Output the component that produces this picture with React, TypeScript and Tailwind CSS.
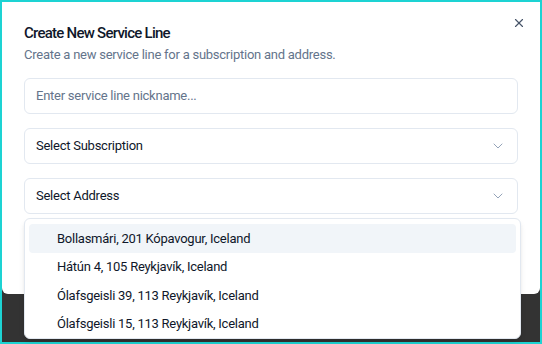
import { ChevronDown, X } from "lucide-react";

const addresses = [
  "Bollasmári, 201 Kópavogur, Iceland",
  "Hátún 4, 105 Reykjavík, Iceland",
  "Ólafsgeisli 39, 113 Reykjavík, Iceland",
  "Ólafsgeisli 15, 113 Reykjavík, Iceland",
];

const field =
  "relative flex h-[36px] w-full items-center rounded-md border border-[#e2e8f0] bg-white px-[11px] text-[13px] tracking-[-0.25px]";

const SelectField = ({ label }: { label: string }) => (
  <div className={`${field} justify-between text-[#0f172a]`}>
    <span>{label}</span>
    <ChevronDown className="h-4 w-4 text-[#94a3b8]" strokeWidth={1.5} />
  </div>
);

export default function App() {
  return (
    <div
      className="relative flex h-[344px] w-[542px] flex-col border-2 border-[#1dd3d3] bg-[#333333]"
      style={{ fontFamily: 'Roboto, "Noto Sans", sans-serif' }}
    >
      <div className="relative flex h-[292px] w-full flex-col rounded-b-md bg-white px-[22px] pt-[20px]">
        <button className="absolute right-[14px] top-[14px] text-[#475569]">
          <X className="h-[14px] w-[14px]" strokeWidth={2} />
        </button>
        <h2 className="text-[15px] font-medium leading-[23px] tracking-[-0.75px] text-[#0f172a]">
          Create New Service Line
        </h2>
        <p className="text-[13px] leading-[20px] tracking-[-0.25px] text-[#64748b]">
          Create a new service line for a subscription and address.
        </p>
        <div className="mt-[13px] flex flex-col gap-[14px]">
          <div className={`${field} text-[#64748b]`}>Enter service line nickname...</div>
          <SelectField label="Select Subscription" />
          <SelectField label="Select Address" />
        </div>
      </div>
      <div className="absolute left-[22px] top-[216px] w-[497px] rounded-md border border-[#e2e8f0] bg-white px-[4px] pt-[5px] shadow-md">
        {addresses.map((a, i) => (
          <div
            key={a}
            className={`flex h-[28.5px] items-center rounded-sm pl-[28px] text-[13px] tracking-[-0.25px] text-[#0f172a] ${
              i === 0 ? "bg-[#f1f5f9]" : ""
            }`}
          >
            {a}
          </div>
        ))}
      </div>
    </div>
  );
}
